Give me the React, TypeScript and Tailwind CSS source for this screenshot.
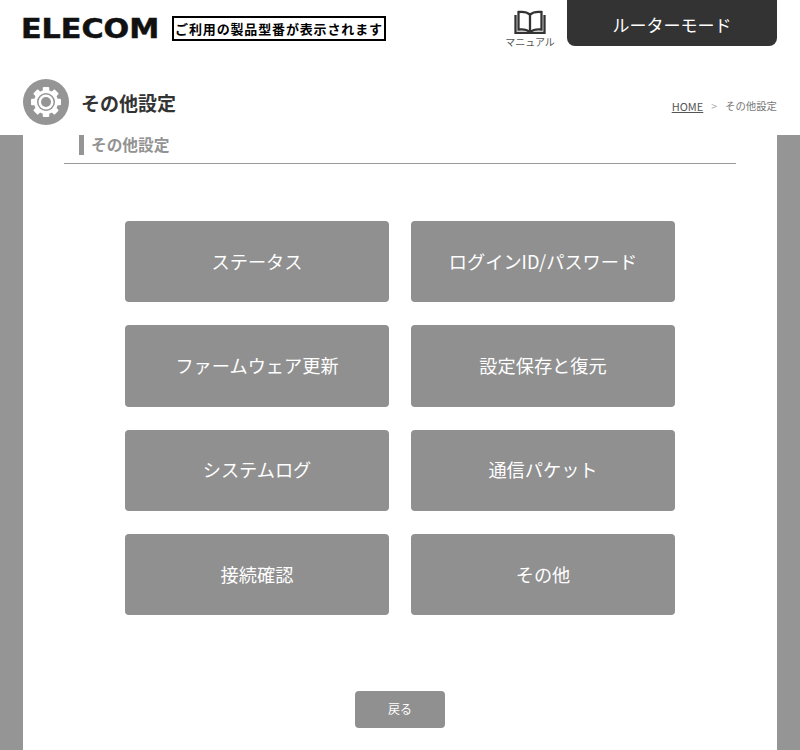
const menuItems = [
  'ステータス',
  'ログインID/パスワード',
  'ファームウェア更新',
  '設定保存と復元',
  'システムログ',
  '通信パケット',
  '接続確認',
  'その他',
];

function GearIcon() {
  const teeth = [0, 45, 90, 135, 180, 225, 270, 315];
  return (
    <svg viewBox="0 0 46 46" className="h-[46px] w-[46px] shrink-0">
      <circle cx="23" cy="23" r="23" fill="#959595" />
      {teeth.map((deg) => (
        <rect key={deg} x="19.75" y="8" width="6.5" height="6" rx="1" fill="#fff" transform={`rotate(${deg} 23 23)`} />
      ))}
      <circle cx="23" cy="23" r="12" fill="#fff" />
      <circle cx="23" cy="23" r="9" fill="#959595" />
      <circle cx="23" cy="23" r="7.5" fill="#fff" />
      <circle cx="23" cy="23" r="5" fill="#959595" />
    </svg>
  );
}

function BookIcon() {
  return (
    <svg viewBox="0 0 32 24" className="h-[24px] w-[32px]" fill="none" stroke="#333" strokeWidth="2.3">
      <path d="M4.500 2c4-.5 8.500 0 11.500 2.500C19 2 23.500 1.500 27.500 2v17.500c-4-.5-8.500 0-11.500 2.500-3-2.500-7.500-3-11.500-2.500z" />
      <path d="M16 4.500V22" />
      <path d="M1.500 5v17.800h29V5" />
    </svg>
  );
}

export default function App() {
  return (
    <div
      className="h-[750px] w-[800px] overflow-hidden bg-[#959595]"
      style={{ fontFamily: '"Noto Sans CJK JP", "Noto Sans", sans-serif' }}
    >
      <header className="h-[135px] bg-white px-[23px]">
        <div className="flex h-[79px] items-start">
          <div className="mt-[11px] ml-[-2px] w-[151px] shrink-0 origin-left scale-x-[1.16] text-[26px] leading-[36px] font-bold text-[#111] [-webkit-text-stroke:0.5px_#111]" style={{ fontFamily: '"DejaVu Sans", sans-serif' }}>
            ELECOM
          </div>
          <div className="mt-[16px] flex h-[25px] w-[214px] shrink-0 items-center justify-center border-2 border-black text-[13px] font-bold tracking-[0.85px] whitespace-nowrap text-black">
            ご利用の製品型番が表示されます
          </div>
          <div className="mt-[10px] ml-[114px] flex w-[60px] shrink-0 flex-col items-center">
            <BookIcon />
            <span className="mt-[1px] text-[10px] leading-[14px] text-[#555]">マニュアル</span>
          </div>
          <div className="ml-[7px] flex h-[46px] w-[210px] shrink-0 items-center justify-center rounded-b-lg bg-[#333] pt-[3px] text-[17px] text-white">
            ルーターモード
          </div>
        </div>
        <div className="flex items-center">
          <GearIcon />
          <h1 className="mt-[2px] ml-[12px] text-[19px] font-bold text-[#333]">その他設定</h1>
          <div className="mt-[8px] ml-auto flex items-center text-[10.400px] text-[#777]">
            <span className="text-[11px] text-[#555] underline">HOME</span>
            <span className="mx-[8px] text-[#aaa]">&gt;</span>
            <span>その他設定</span>
          </div>
        </div>
      </header>

      <main className="mx-[23px] h-[615px] bg-white px-[41px]">
        <div className="h-[29px] border-b border-[#999] pl-[15px]">
          <h2 className="h-[20px] border-l-[5px] border-[#959595] pl-[7px] text-[15.700px] leading-[20px] font-bold text-[#939393]">
            その他設定
          </h2>
        </div>
        <div className="mt-[57px] grid grid-cols-[264px_264px] justify-center gap-x-[22px] gap-y-[23px]">
          {menuItems.map((label) => (
            <div key={label} className="flex h-[81.330px] items-center justify-center rounded bg-[#909090] pb-[1px] text-[18.200px] text-white">
              {label}
            </div>
          ))}
        </div>
        <div className="mt-[75.670px] flex justify-center">
          <div className="flex h-[37px] w-[90px] items-center justify-center rounded bg-[#909090] text-[12px] text-white">
            戻る
          </div>
        </div>
      </main>
    </div>
  );
}
